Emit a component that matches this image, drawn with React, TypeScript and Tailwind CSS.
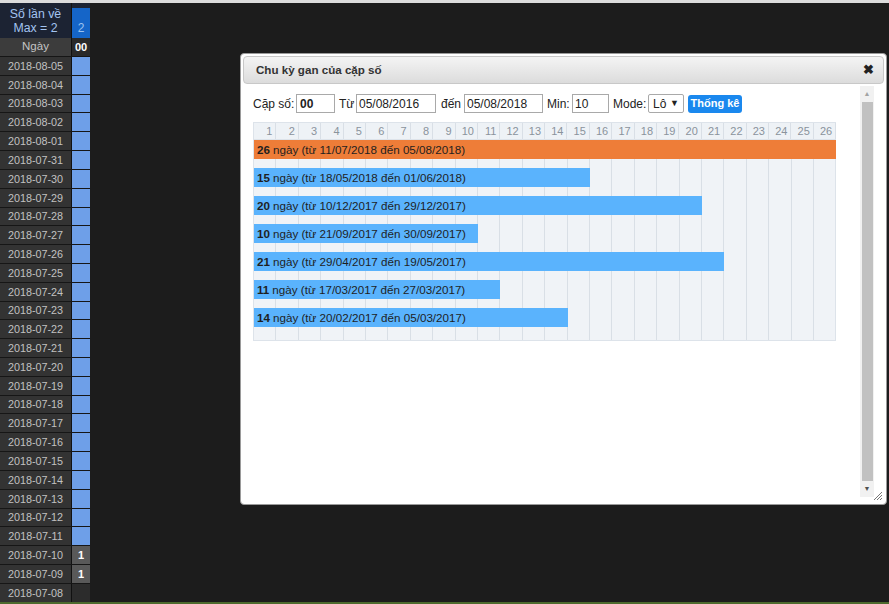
import React from "react";

const dates = [
  "2018-08-05","2018-08-04","2018-08-03","2018-08-02","2018-08-01","2018-07-31","2018-07-30","2018-07-29","2018-07-28","2018-07-27","2018-07-26","2018-07-25","2018-07-24","2018-07-23","2018-07-22","2018-07-21","2018-07-20","2018-07-19","2018-07-18","2018-07-17","2018-07-16","2018-07-15","2018-07-14","2018-07-13","2018-07-12","2018-07-11","2018-07-10","2018-07-09","2018-07-08",
];

const bars = [
  { n: 26, from: "11/07/2018", to: "05/08/2018", orange: true },
  { n: 15, from: "18/05/2018", to: "01/06/2018" },
  { n: 20, from: "10/12/2017", to: "29/12/2017" },
  { n: 10, from: "21/09/2017", to: "30/09/2017" },
  { n: 21, from: "29/04/2017", to: "19/05/2017" },
  { n: 11, from: "17/03/2017", to: "27/03/2017" },
  { n: 14, from: "20/02/2017", to: "05/03/2017" },
];

const COL = 22.4;

function LeftTable() {
  return (
    <div className="w-[90px] flex flex-col text-[10.8px]">
      <div className="flex h-[35px] bg-[#1c2333]">
        <div className="w-[71px] flex flex-col items-center justify-center text-[#a3c4f0] text-[12.3px] leading-[14px]">
          <span>Số lần về</span>
          <span>Max = 2</span>
        </div>
        <div className="w-[1px] bg-[#111]" />
        <div className="w-[18px] mt-[5px] bg-[#1565c8] flex items-end justify-center text-[#9cc3f0] text-[12px] pb-[1px]">2</div>
      </div>
      <div className="flex h-[19px] border-b border-[#161616]">
        <div className="w-[71px] bg-[#3c3c3c] flex items-center justify-center text-[#c4c4c4] text-[11.5px]">Ngày</div>
        <div className="w-[1px] bg-[#111]" />
        <div className="w-[18px] bg-[#2a2a2a] flex items-center justify-center text-white font-bold text-[11px]">00</div>
      </div>
      {dates.map((d, i) => {
        const one = i === 26 || i === 27;
        const last = i === 28;
        return (
          <div key={d} className="flex h-[18.82px] shrink-0 border-b border-[#161616]">
            <div className="w-[71px] bg-[#333333] flex items-center justify-center text-[#c2c2c2]">{d}</div>
            <div className="w-[1px] bg-[#111]" />
            <div
              className={
                "w-[18px] flex items-center justify-center text-white font-bold text-[11px] " +
                (one ? "bg-[#595959]" : last ? "bg-[#2c2c2c]" : "bg-[#6e9fe8]")
              }
            >
              {one ? "1" : ""}
            </div>
          </div>
        );
      })}
    </div>
  );
}

function Chart() {
  return (
    <div className="w-[583px] border border-[#dde3ea] bg-[repeating-linear-gradient(to_right,#f0f3f7_0px,#f0f3f7_21.4px,#d9dfe6_21.4px,#d9dfe6_22.4px)]">
      <div className="flex h-[17px] border-b border-[#dde3ea]">
        {Array.from({ length: 26 }, (_, i) => (
          <div key={i} className="w-[22.4px] shrink-0 flex items-center justify-end pr-[3px] text-[11px] text-[#8a939c] bg-[#eef2f6] border-r border-[#d9dfe6]">
            {i + 1}
          </div>
        ))}
      </div>
      <div className="flex flex-col gap-[9px] pb-[13px]">
        {bars.map((b) => (
          <div
            key={b.n}
            className={
              "h-[19px] flex items-center pl-[3px] whitespace-nowrap text-[11.65px] text-[#1f1f1f] " +
              (b.orange ? "bg-[#ee7d38]" : "bg-[#5ab3fd]")
            }
            style={{ width: b.n * COL }}
          >
            <b className="mr-[3px]">{b.n}</b>ngày (từ {b.from} đến {b.to})
          </div>
        ))}
      </div>
    </div>
  );
}

function Dialog() {
  return (
    <div className="absolute left-[240px] top-[53px] w-[647px] h-[452px] bg-white rounded-[4px] border border-[#9a9a9a] p-[2px] flex flex-col">
      <div className="h-[28px] rounded-[4px] border border-[#c8c8c8] bg-[linear-gradient(#f4f4f4,#dcdcdc)] flex items-center justify-between pl-[12px] pr-[9px]">
        <span className="font-bold text-[11.6px] text-[#333]">Chu kỳ gan của cặp số</span>
        <span className="font-bold text-[13px] text-[#222]">✖</span>
      </div>
      <div className="flex-1 flex relative">
        <div className="flex-1 pl-[10px] pt-[10px] text-[12px] text-[#222]">
          <div className="flex items-center h-[19px]">
            <span className="w-[43px] shrink-0 whitespace-nowrap">Cặp số:</span>
            <div className="w-[39px] h-[19px] border border-[#a9a9a9] flex items-center pl-[3px] font-bold">00</div>
            <span className="ml-[4px] w-[17px] shrink-0">Từ</span>
            <div className="w-[80px] h-[19px] border border-[#a9a9a9] flex items-center pl-[2px]">05/08/2016</div>
            <span className="ml-[5px] w-[23px] shrink-0">đến</span>
            <div className="w-[79px] h-[19px] border border-[#a9a9a9] flex items-center pl-[2px]">05/08/2018</div>
            <span className="ml-[4px] w-[25px] shrink-0">Min:</span>
            <div className="w-[37px] h-[19px] border border-[#a9a9a9] flex items-center pl-[2px]">10</div>
            <span className="ml-[4px] w-[35px] shrink-0">Mode:</span>
            <div className="w-[36px] h-[19px] border border-[#a9a9a9] rounded-[2px] flex items-center justify-between px-[4px]">
              <span>Lô</span>
              <span className="text-[9px]">▼</span>
            </div>
            <div className="ml-[4px] w-[54px] h-[18px] rounded-[3px] bg-[#1a88ee] text-white font-bold text-[11px] flex items-center justify-center whitespace-nowrap">Thống kê</div>
          </div>
          <div className="mt-[9px]">
            <Chart />
          </div>
        </div>
        <div className="w-[14px] mr-[10px] mt-[2px] mb-[5px] bg-[#f1f1f1] flex flex-col items-center">
          <div className="h-[16px] flex items-center justify-center text-[7px] text-[#a3a3a3]">▲</div>
          <div className="w-[11px] flex-1 bg-[#c1c1c1]" />
          <div className="h-[16px] flex items-center justify-center text-[7px] text-[#505050]">▼</div>
        </div>
        <svg className="absolute right-[1px] bottom-[1px]" width="10" height="10" viewBox="0 0 10 10">
          <path d="M9 1 L1 9 M9 4 L4 9 M9 7 L7 9" stroke="#777" strokeWidth="1" />
        </svg>
      </div>
    </div>
  );
}

export default function App() {
  return (
    <div className="relative w-full h-[604px] overflow-hidden bg-[#1c1c1c] font-['Liberation_Sans',Arial,sans-serif]">
      <div className="h-[3px] bg-[#dcdcdc]" />
      <LeftTable />
      <Dialog />
      <div className="absolute left-0 right-0 bottom-0 h-[2px] bg-[#4d6a2e]" />
    </div>
  );
}
